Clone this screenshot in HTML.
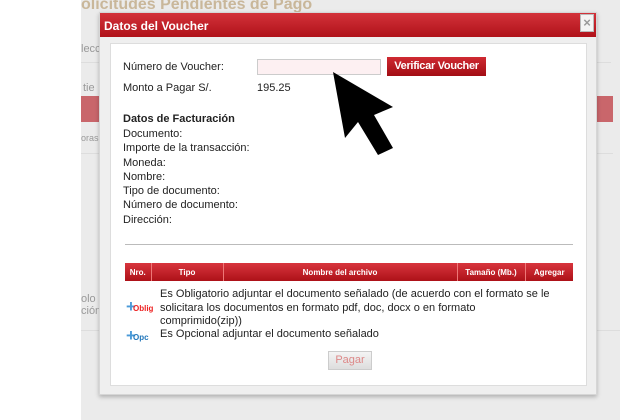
<!DOCTYPE html>
<html><head><meta charset="utf-8"><style>
*{margin:0;padding:0;box-sizing:border-box}
body{width:620px;height:420px;overflow:hidden;background:#fff;font-family:"Liberation Sans",Arial,sans-serif;position:relative}
.bg{position:absolute;left:81px;top:0;width:539px;height:420px;background:#ebebeb}
.abs{position:absolute}
.gt{color:#999;font-size:11px}
.dlg{position:absolute;left:99px;top:12px;width:498px;height:383px;background:#efefef;border:1px solid #d6d6d6;box-shadow:0 2px 4px rgba(0,0,0,.25)}
.tb{position:absolute;left:0;top:0;width:100%;height:24px;background:linear-gradient(#d3323a,#b0121a);color:#fff;font-weight:bold;font-size:12px;padding:6px 0 0 4px}
.x{position:absolute;right:2px;top:1px;width:14px;height:18px;background:#f4f4f4;border:1px solid #bbb;color:#999;font-size:13px;text-align:center;line-height:16px}
.in{position:absolute;left:10px;top:30px;width:477px;height:343px;background:#fff;border:1px solid #ddd}
.t{position:absolute;font-size:11px;color:#222}
table{border-collapse:collapse;position:absolute;left:14px;top:219px;width:448px;height:18px}
td{background:linear-gradient(#d8353d,#ad1118);color:#fff;font-size:8px;font-weight:bold;text-align:center;border-left:1px solid #e77}
.pl{position:absolute;color:#4a9ad8;font-weight:bold;font-size:17px;line-height:17px}
</style></head><body>
<div class="bg"></div>
<div class="abs" style="left:81px;top:-4px;font-size:16px;font-weight:bold;color:#c9b79a">olicitudes Pendientes de Pago</div>
<div class="abs gt" style="left:81px;top:43px">lecc</div>
<div class="abs" style="left:81px;top:62px;width:530px;height:1px;background:#ddd"></div>
<div class="abs gt" style="left:83px;top:82px">tie</div>
<div class="abs" style="left:81px;top:96px;width:532px;height:26px;background:#c9666b"></div>
<div class="abs gt" style="left:81px;top:133px;font-size:9px">oras</div>
<div class="abs" style="left:81px;top:153px;width:532px;height:1px;background:#ddd"></div>
<div class="abs gt" style="left:81px;top:293px">olo<br>ción</div>
<div class="abs" style="left:81px;top:330px;width:539px;height:1px;background:#ddd"></div>
<div class="dlg">
<div class="tb">Datos del Voucher<div class="x">×</div></div>
<div class="in">
<div class="t" style="left:12px;top:17px">Número de Voucher:</div>
<div class="abs" style="left:146px;top:15px;width:124px;height:16px;border:1px solid #ccc;background:#fdf0f2"></div>
<div class="abs" style="left:276px;top:13px;width:99px;height:19px;background:linear-gradient(#cf2a32,#a20d14);color:#fff;font-size:11px;font-weight:bold;text-align:center;line-height:19px;letter-spacing:-0.3px">Verificar Voucher</div>
<div class="t" style="left:12px;top:38px">Monto a Pagar S/.</div>
<div class="t" style="left:146px;top:38px">195.25</div>
<div class="t" style="left:12px;top:69px;font-weight:bold">Datos de Facturación</div>
<div class="t" style="left:12px;top:83px;line-height:14.3px">Documento:<br>Importe de la transacción:<br>Moneda:<br>Nombre:<br>Tipo de documento:<br>Número de documento:<br>Dirección:</div>
<div class="abs" style="left:14px;top:200px;width:448px;height:1px;background:#bbb"></div>
<table><tr><td style="width:26px;border:0">Nro.</td><td style="width:72px">Tipo</td><td>Nombre del archivo</td><td style="width:68px">Tamaño (Mb.)</td><td style="width:48px">Agregar</td></tr></table>
<div class="pl" style="left:15px;top:254px">+</div>
<div class="abs" style="left:22px;top:260px;color:#e22;font-weight:bold;font-size:8px">Oblig</div>
<div class="t" style="left:49px;top:244px;width:392px;line-height:13.5px">Es Obligatorio adjuntar el documento señalado (de acuerdo con el formato se le solicitara los documentos en formato pdf, doc, docx o en formato comprimido(zip))</div>
<div class="pl" style="left:15px;top:283px">+</div>
<div class="abs" style="left:22px;top:289px;color:#27b;font-weight:bold;font-size:8px">Opc</div>
<div class="t" style="left:49px;top:284px">Es Opcional adjuntar el documento señalado</div>
<div class="abs" style="left:217px;top:307px;width:44px;height:19px;background:linear-gradient(#f4f4f4,#ddd);border:1px solid #ccc;color:#d88;font-size:11px;text-align:center;line-height:17px">Pagar</div>
</div>
</div>
<svg class="abs" style="left:0;top:0" width="620" height="420"><polygon points="333,72 345,138 358,122 378,155 393,148 374,115 393,107" fill="#000"/></svg>
</body></html>
